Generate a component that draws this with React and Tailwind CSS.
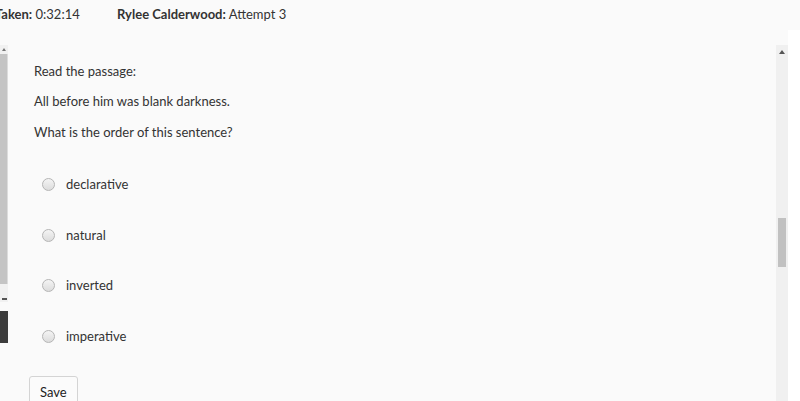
import React from "react";

const OPTIONS = ["declarative", "natural", "inverted", "imperative"];

const Radio = () => (
  <span className="inline-block w-[13px] h-[13px] rounded-full border border-[#b5b5b5] bg-gradient-to-b from-[#f4f4f4] to-[#dcdcdc]" />
);

export default function App() {
  return (
    <div
      className="w-[800px] h-[401px] overflow-hidden bg-white text-[#333] flex flex-col"
      style={{ fontFamily: "Lato, 'Open Sans', sans-serif" }}
    >
      {/* header */}
      <div className="h-[30px] shrink-0 flex items-center text-[13px] bg-[#fafafa]">
        <div className="ml-[-5px] w-[122px]">
          <span className="font-bold">Taken:</span> 0:32:14
        </div>
        <div>
          <span className="font-bold">Rylee Calderwood:</span> Attempt 3
        </div>
      </div>

      <div className="flex flex-1 min-h-0 bg-[#fafafa]">
        {/* left scroll strip */}
        <div className="w-[8px] shrink-0 flex flex-col pt-[15px]">
          <div className="h-[9px] bg-[#f1f1f1] flex items-center justify-center">
            <div className="w-0 h-0 border-x-[2px] border-x-transparent border-b-[3px] border-b-[#777]" />
          </div>
          <div className="h-[230px] bg-[#c4c4c4] border-r border-[#dcdcdc]" />
          <div className="h-[18px] bg-[#f1f1f1] flex items-end justify-center pb-[2px]">
            <div className="w-[5px] h-[2px] bg-[#555]" />
          </div>
          <div className="h-[9px]" />
          <div className="h-[32px] bg-[#3c3c3c]" />
        </div>

        {/* main */}
        <div className="flex-1 pl-[26px] pt-[32px] text-[13px]">
          <p className="h-[30px]">Read the passage:</p>
          <p className="h-[31px]">All before him was blank darkness.</p>
          <p className="h-[30px]">What is the order of this sentence?</p>
          <div className="mt-[19px] pl-[8px] flex flex-col">
            {OPTIONS.map((opt) => (
              <label key={opt} className="h-[50.5px] flex items-start gap-[11px] pt-[3px]">
                <span className="mt-[2px]"><Radio /></span>
                <span>{opt}</span>
              </label>
            ))}
          </div>
          <button className="mt-[2px] ml-[-5px] px-[10px] pt-[6px] pb-[8px] border border-[#d4d4d4] rounded-[3px] bg-[#fbfbfb] text-[13px] text-[#222]">
            Save
          </button>
        </div>

        {/* right scrollbar */}
        <div className="w-[12px] shrink-0 mt-[15px] bg-[#f0f0f0] flex flex-col items-center">
          <div className="mt-[5px] w-0 h-0 border-x-[3px] border-x-transparent border-b-[4px] border-b-[#555]" />
          <div className="mt-[164px] w-[8px] h-[49px] bg-[#c1c1c1]" />
        </div>
        <div className="w-[12px] shrink-0 bg-white" />
      </div>
    </div>
  );
}
